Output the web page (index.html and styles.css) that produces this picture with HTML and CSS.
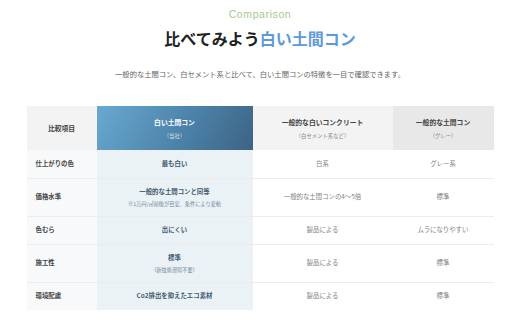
FILE: index.html
```html
<!DOCTYPE html>
<html lang="ja">
<head>
<meta charset="utf-8">
<link rel="stylesheet" href="styles.css">
</head>
<body>
<section class="compare">
  <p class="eyebrow">Comparison</p>
  <h2 class="title">比べてみよう<span class="accent">白い土間コン</span></h2>
  <p class="lead">一般的な土間コン、白セメント系と比べて、白い土間コンの特徴を一目で確認できます。</p>
  <table class="table">
    <colgroup>
      <col class="c1"><col class="c2"><col class="c3"><col class="c4">
    </colgroup>
    <thead>
      <tr>
        <th class="h-item">比較項目</th>
        <th class="h-ours">白い土間コン<span class="sub">（当社）</span></th>
        <th class="h-white">一般的な白いコンクリート<span class="sub">（白セメント系など）</span></th>
        <th class="h-gray">一般的な土間コン<span class="sub">（グレー）</span></th>
      </tr>
    </thead>
    <tbody>
      <tr class="r-short">
        <th>仕上がりの色</th>
        <td class="ours">最も白い</td>
        <td>白系</td>
        <td>グレー系</td>
      </tr>
      <tr class="r-tall">
        <th>価格水準</th>
        <td class="ours">一般的な土間コンと同等<span class="note">※1万円/㎡前後が目安、条件により変動</span></td>
        <td>一般的な土間コンの4〜5倍</td>
        <td>標準</td>
      </tr>
      <tr class="r-short">
        <th>色むら</th>
        <td class="ours">出にくい</td>
        <td>製品による</td>
        <td>ムラになりやすい</td>
      </tr>
      <tr class="r-tall">
        <th>施工性</th>
        <td class="ours">標準<span class="note paren">（新技術習得不要）</span></td>
        <td>製品による</td>
        <td>標準</td>
      </tr>
      <tr class="r-short last">
        <th>環境配慮</th>
        <td class="ours">Co2排出を抑えたエコ素材</td>
        <td>製品による</td>
        <td>標準</td>
      </tr>
    </tbody>
  </table>
</section>
</body>
</html>
```
FILE: styles.css
```css
* { box-sizing: border-box; }
html, body { margin: 0; padding: 0; background: #fff; }
body {
  width: 520px;
  height: 332px;
  overflow: hidden;
  font-family: "Noto Sans CJK JP", "Noto Sans", sans-serif;
  color: #333;
}
.compare {
  display: flex;
  flex-direction: column;
  align-items: center;
  padding-top: 7px;
}
.eyebrow {
  margin: 0;
  font-family: "Liberation Sans", Arial, sans-serif;
  font-size: 10.5px;
  line-height: 14px;
  letter-spacing: 0.6px;
  color: #a6c98a;
}
.title {
  margin: 5px 0 0;
  font-size: 16px;
  line-height: 24px;
  font-weight: 700;
  color: #222;
}
.accent { color: #5d9ad6; }
.lead {
  margin: 18px 0 0;
  font-size: 7.3px;
  line-height: 12px;
  color: #666;
}
.table {
  margin-top: 26px;
  width: 467px;
  border-collapse: collapse;
  table-layout: fixed;
  font-size: 6.4px;
}
.c1 { width: 70px; }
.c2 { width: 156px; }
.c3 { width: 140px; }
.c4 { width: 101px; }
.table thead th {
  height: 44px;
  padding: 0;
  text-align: center;
  vertical-align: middle;
  font-weight: 700;
  font-size: 6.8px;
  line-height: 10px;
  color: #444;
}
.sub {
  display: block;
  margin-top: 5px;
  font-weight: 400;
  font-size: 5.4px;
  line-height: 8px;
  color: #888;
}
.h-item { background: #f3f3f3; }
.h-ours {
  background: linear-gradient(120deg, #69a9d1 0%, #4f86ad 50%, #3c6384 100%);
  color: #fff !important;
}
.h-ours .sub { color: rgba(255,255,255,0.75); }
.h-white { background: #f3f3f3; }
.h-gray { background: #e8e8e8; }
.table tbody th,
.table tbody td {
  padding: 0;
  vertical-align: middle;
  border-bottom: 1px solid #ececec;
  line-height: 10px;
}
.table tbody tr.last th,
.table tbody tr.last td { border-bottom: none; }
.r-short th, .r-short td { height: 28px; }
.r-tall th, .r-tall td { height: 38px; }
.table tbody th {
  background: #f8f9fa;
  text-align: left;
  padding-left: 9px;
  font-weight: 700;
  color: #444;
}
.table tbody td {
  text-align: center;
  color: #808080;
}
.table tbody td.ours {
  background: #eaf2f6;
  color: #405a70;
  font-weight: 700;
}
.note {
  display: block;
  margin-top: 3px;
  font-weight: 400;
  font-size: 5.2px;
  line-height: 8px;
  color: #6f8596;
}
```
